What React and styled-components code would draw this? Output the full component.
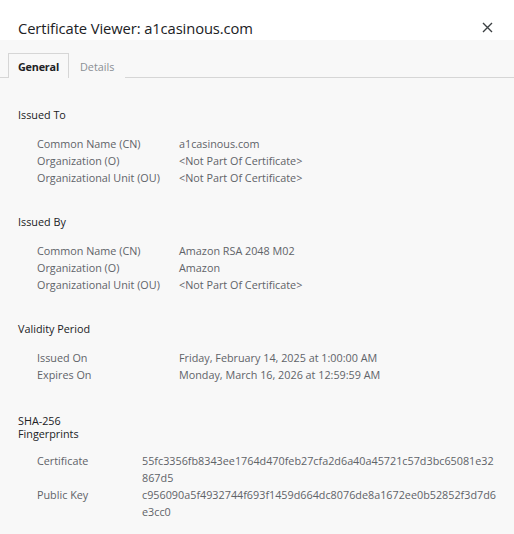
import React from 'react';
import styled, { createGlobalStyle } from 'styled-components';

const GlobalStyle = createGlobalStyle`
  html, body {
    margin: 0;
    padding: 0;
    background: #f8f8f8;
  }
  body {
    font-family: "Open Sans", "Noto Sans", sans-serif;
  }
`;

const Dialog = styled.div`
  width: 514px;
  height: 534px;
  background: #f8f8f8;
  overflow: hidden;
`;

const Header = styled.div`
  height: 40px;
  background: #ffffff;
  display: flex;
  align-items: center;
  justify-content: space-between;
  padding: 14px 20px 0 18px;
  box-sizing: border-box;
`;

const Title = styled.h1`
  margin: 2px 0 0;
  font-size: 14.75px;
  font-weight: 400;
  color: #202124;
  letter-spacing: -0.1px;
`;

const CloseButton = styled.button`
  border: none;
  background: none;
  padding: 0;
  width: 14px;
  height: 14px;
  display: flex;
  align-items: center;
  justify-content: center;
  cursor: pointer;
`;

const TabBar = styled.div`
  display: flex;
  padding: 13px 0 0 8px;
  border-bottom: 1px solid #d6d6d6;
`;

const Tab = styled.div`
  height: 24px;
  display: flex;
  align-items: center;
  padding: 0 ${({ active }) => (active ? '9px' : '10px')};
  font-size: 10.8px;
  font-weight: ${({ active }) => (active ? 700 : 400)};
  letter-spacing: ${({ active }) => (active ? '-0.2px' : '0')};
  color: ${({ active }) => (active ? '#202124' : '#8a8f94')};
  border: 1px solid ${({ active }) => (active ? '#d6d6d6' : 'transparent')};
  border-bottom: none;
  background: #f8f8f8;
  margin-bottom: -1px;
`;

const Content = styled.div`
  padding: 28px 0 0 18px;
`;

const Section = styled.section`
  margin-bottom: ${({ gap }) => gap}px;
`;

const Heading = styled.h2`
  margin: 0 0 12px;
  font-size: 10.8px;
  font-weight: 400;
  line-height: ${({ narrow }) => (narrow ? '13px' : '17px')};
  color: #202124;
  width: ${({ narrow }) => (narrow ? '70px' : 'auto')};
`;

const Rows = styled.div`
  display: grid;
  grid-template-columns: ${({ labelWidth }) => labelWidth}px 356px;
  padding-left: 19px;
  font-size: 10.8px;
  line-height: 17px;
  color: #5f6368;
`;

const Label = styled.div``;

const Value = styled.div`
  word-break: break-all;
`;

const sections = [
  {
    title: 'Issued To',
    labelWidth: 142,
    gap: 27,
    rows: [
      ['Common Name (CN)', 'a1casinous.com'],
      ['Organization (O)', '<Not Part Of Certificate>'],
      ['Organizational Unit (OU)', '<Not Part Of Certificate>'],
    ],
  },
  {
    title: 'Issued By',
    labelWidth: 142,
    gap: 27,
    rows: [
      ['Common Name (CN)', 'Amazon RSA 2048 M02'],
      ['Organization (O)', 'Amazon'],
      ['Organizational Unit (OU)', '<Not Part Of Certificate>'],
    ],
  },
  {
    title: 'Validity Period',
    labelWidth: 142,
    gap: 31,
    rows: [
      ['Issued On', 'Friday, February 14, 2025 at 1:00:00 AM'],
      ['Expires On', 'Monday, March 16, 2026 at 12:59:59 AM'],
    ],
  },
  {
    title: 'SHA-256 Fingerprints',
    labelWidth: 105,
    narrow: true,
    gap: 0,
    rows: [
      ['Certificate', '55fc3356fb8343ee1764d470feb27cfa2d6a40a45721c57d3bc65081e32867d5'],
      ['Public Key', 'c956090a5f4932744f693f1459d664dc8076de8a1672ee0b52852f3d7d6e3cc0'],
    ],
  },
];

export default function App() {
  return (
    <Dialog>
      <GlobalStyle />
      <Header>
        <Title>Certificate Viewer: a1casinous.com</Title>
        <CloseButton aria-label="Close">
          <svg width="11" height="11" viewBox="0 0 11 11">
            <path d="M1 1 L10 10 M10 1 L1 10" stroke="#3c4043" strokeWidth="1.4" />
          </svg>
        </CloseButton>
      </Header>
      <TabBar>
        <Tab active>General</Tab>
        <Tab>Details</Tab>
      </TabBar>
      <Content>
        {sections.map((s) => (
          <Section key={s.title} gap={s.gap}>
            <Heading narrow={s.narrow}>{s.title}</Heading>
            <Rows labelWidth={s.labelWidth}>
              {s.rows.map(([label, value]) => (
                <React.Fragment key={label}>
                  <Label>{label}</Label>
                  <Value>{value}</Value>
                </React.Fragment>
              ))}
            </Rows>
          </Section>
        ))}
      </Content>
    </Dialog>
  );
}
